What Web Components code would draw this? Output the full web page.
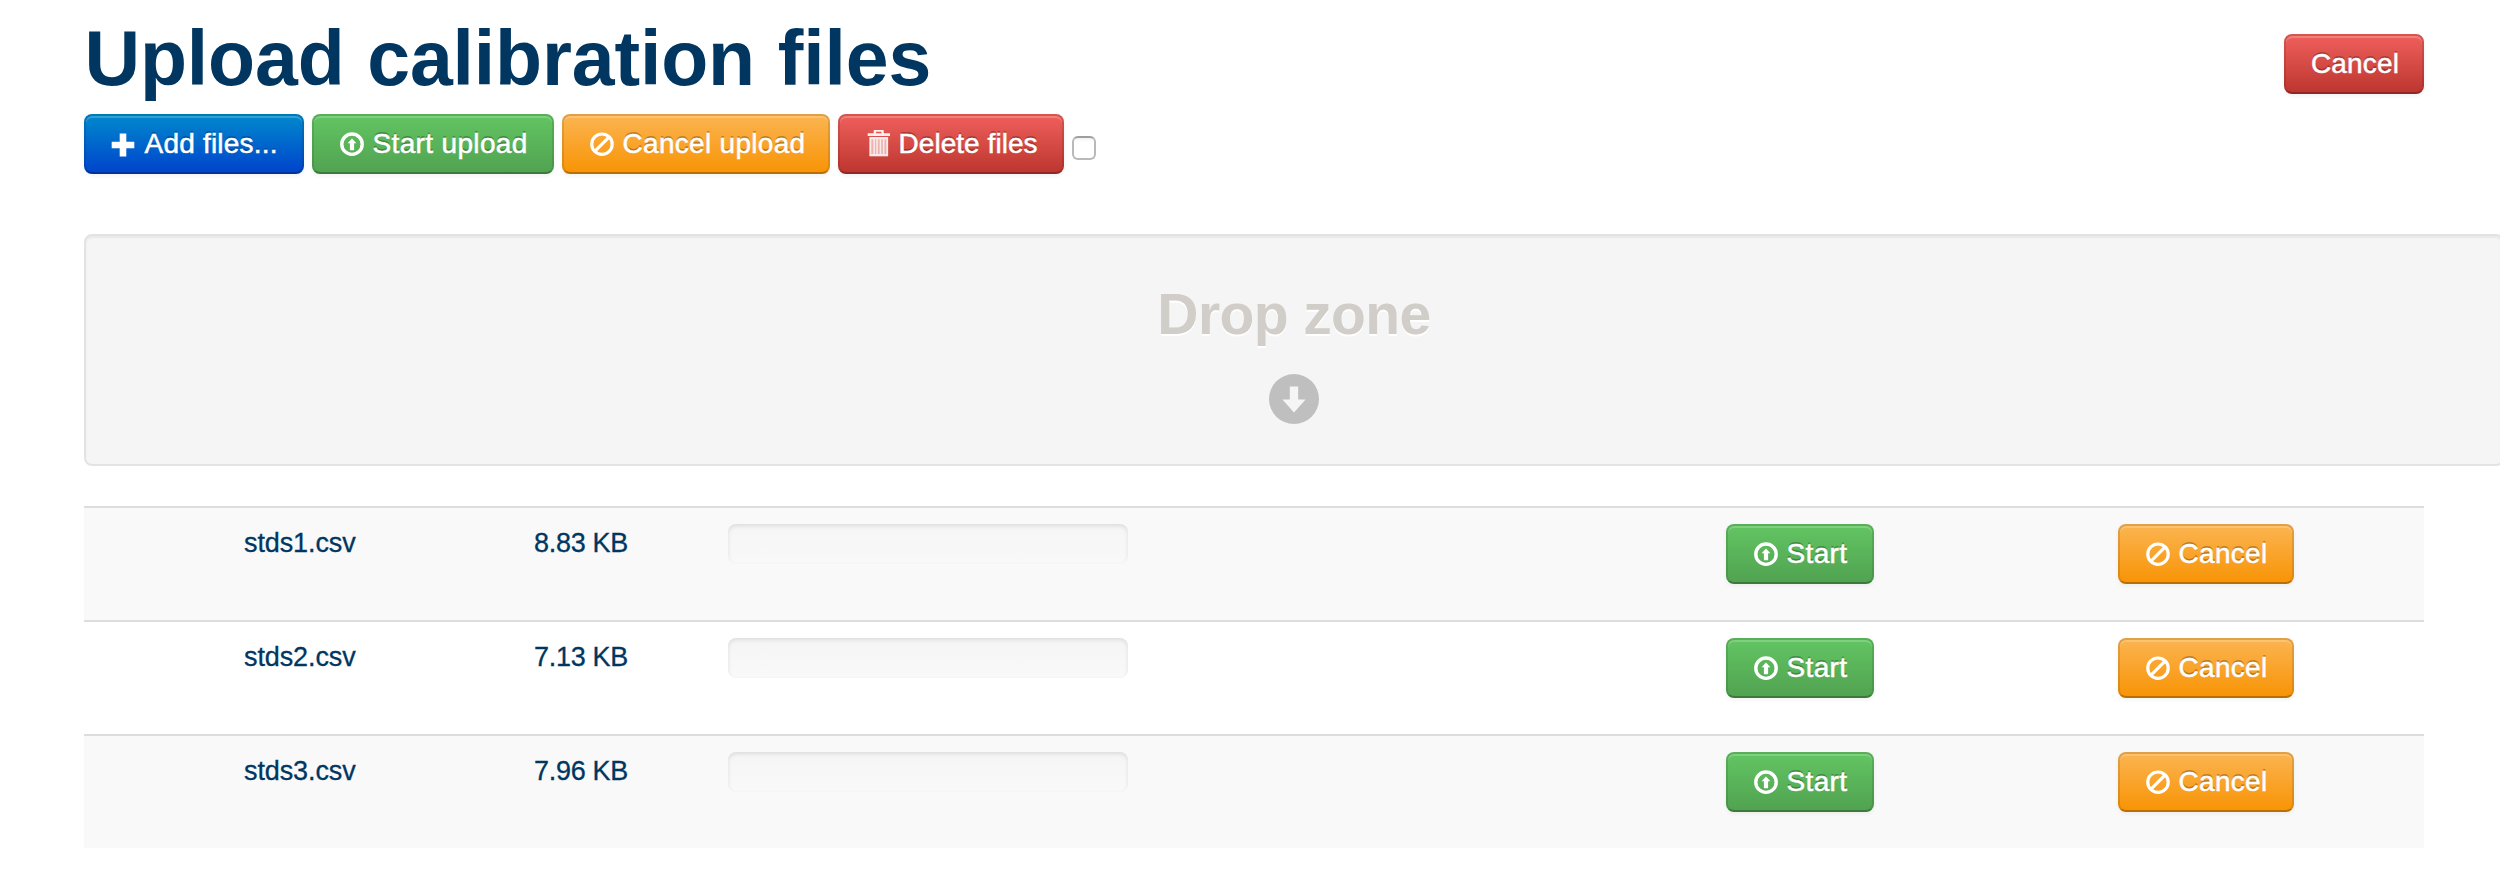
<!DOCTYPE html>
<html lang="en">
<head>
<meta charset="utf-8">
<title>Upload calibration files</title>
<style>
html,body{margin:0;background:#fff}
body{height:890px;overflow:hidden;color:#003660;font-family:"Liberation Sans",Arial,sans-serif}
</style>
</head>
<body>
<upload-page></upload-page>
<script>
const define=(name,html,setup)=>{
  const t=document.createElement('template');
  t.innerHTML=html;
  customElements.define(name,class extends HTMLElement{
    constructor(){super();this.attachShadow({mode:'open'}).append(t.content.cloneNode(true))}
    connectedCallback(){if(setup)setup(this,this.shadowRoot)}
  });
};

const glyphs={
  plus:'<path d="M9.700 3.600h6.600v8.200h8v6.400h-8V26.400H9.700v-8.200h-8v-6.400h8z"/>',
  up:'<circle cx="14" cy="14.200" r="10.200" fill="none" stroke="#fff" stroke-width="3.400"/><path d="M14 8.600l4.400 4.700h-2.300v6.900h-4.200v-6.900H9.600z"/>',
  ban:'<circle cx="14" cy="14.200" r="10.200" fill="none" stroke="#fff" stroke-width="3.200"/><path d="M7 21.200L21 7.200" fill="none" stroke="#fff" stroke-width="3.200"/>',
  trash:'<path fill-rule="evenodd" fill-opacity=".9" d="M9.700 3.200V0h10v3.200H26V6H3.700V3.200zM12 1.700v1.500h5.400V1.700z"/><path d="M5.500 7h18.600v19.200H5.500z" fill-opacity=".58"/><path fill-opacity=".75" d="M5.500 7h18.600v2.200H5.500zM5.500 24h18.600v2.200H5.500zM5.500 9.200H7.300V24H5.500zM9.400 9.200H10.900V24H9.400zM12.300 9.200h1.500V24h-1.500zM15.700 9.200h1.500V24h-1.500zM18.900 9.200h1.500V24h-1.500zM22.300 9.200h1.800V24h-1.800z"/>',
  down:'<path fill="#bfbfbf" fill-rule="evenodd" d="M14 1.500a12.500 12.500 0 1 0 0 25a12.500 12.500 0 1 0 0-25zM11.900 7.800h4.200v6.400h3.700L14 20.800l-5.800-6.600h3.700z"/>'
};

define('ui-icon',`<style>
:host{display:block;width:28px;height:28px;flex:none}
svg{display:block;width:100%;height:100%;fill:#fff;overflow:visible}
</style><svg viewBox="0 0 28 28"></svg>`,(el,root)=>{
  root.querySelector('svg').innerHTML=glyphs[el.getAttribute('name')];
});

define('ui-button',`<style>
:host{display:block;flex:none;width:var(--w);height:60px}
button{box-sizing:border-box;display:flex;align-items:center;gap:6.500px;width:100%;height:60px;margin:0;padding:0 0 0 var(--pl,24px);
 border:2px solid;border-color:rgba(0,0,0,.1) rgba(0,0,0,.1) rgba(0,0,0,.25);border-radius:8px;
 background:linear-gradient(var(--a),var(--b)) padding-box,linear-gradient(var(--a),var(--b)) border-box;
 box-shadow:inset 0 2px 0 rgba(255,255,255,.2),0 2px 4px rgba(0,0,0,.05);
 color:#fff;font:28px/40px "Liberation Sans",Arial,sans-serif;letter-spacing:var(--ls,.3px);white-space:nowrap;
 text-shadow:0 -2px 0 rgba(0,0,0,.25);-webkit-text-stroke:.5px #fff}
:host([kind=primary]){--a:#0088cc;--b:#0044cc}
:host([kind=success]){--a:#62c462;--b:#51a351}
:host([kind=warning]){--a:#fbb450;--b:#f89406}
:host([kind=danger]){--a:#ee5f5b;--b:#bd362f}
</style><button><slot name="icon"></slot><slot></slot></button>`);

define('page-header',`<style>
:host{display:flex;justify-content:space-between;align-items:flex-start;height:114px}
h1{margin:0;padding-top:18px;font-size:77px;line-height:80px;font-weight:700;white-space:nowrap;letter-spacing:-.15px;word-spacing:1.500px;text-indent:.5px}
.end{padding-top:34px}
</style><h1><slot></slot></h1><div class="end"><slot name="action"></slot></div>`);

define('upload-toolbar',`<style>
:host{display:flex;gap:8px;height:120px}
input{appearance:none;box-sizing:border-box;width:24px;height:24px;margin:22px 0 0;border:2px solid #b9b9b9;border-top-color:#9e9e9e;border-radius:6px;background:linear-gradient(#f2f2f2,#fff 4px)}
</style><slot></slot><input type="checkbox" aria-label="Select all">`);

define('drop-zone',`<style>
:host{box-sizing:border-box;display:flex;flex-direction:column;align-items:center;width:2420px;height:232px;
 border:2px solid #e3e3e3;border-radius:8px;background:#f5f5f5;box-shadow:inset 0 2px 2px rgba(0,0,0,.05);
 padding-top:46px}
.label{font-size:57px;line-height:64px;font-weight:700;color:#d1cdc8;text-shadow:0 2px 0 #fff;white-space:nowrap;letter-spacing:-.6px}
ui-icon{width:56px;height:56px;margin-top:25px}
</style><span class="label"><slot></slot></span><ui-icon name="down"></ui-icon>`);

define('progress-track',`<style>
:host{display:block;width:400px;height:40px;border-radius:8px;background:linear-gradient(#f5f5f5,#f9f9f9);box-shadow:inset 0 2px 4px rgba(0,0,0,.1)}
</style>`);

define('file-row',`<style>
:host{box-sizing:border-box;display:grid;grid-template-columns:144px 290px 194px 998px 392px 1fr;height:114px;border-top:2px solid #ddd}
:host(:nth-child(odd)){background:#f9f9f9}
.c{padding:16px 16px 0}
.c{font-size:27px;line-height:40px;white-space:nowrap}
.name,.size{padding-top:15px;letter-spacing:-.1px;-webkit-text-stroke:.3px #003660}
.size{letter-spacing:-.3px}
</style><div class="c"></div><div class="c name"></div><div class="c size"></div>
<div class="c"><progress-track></progress-track></div>
<div class="c"><ui-button kind="success" style="--w:148px;--ls:.35px"><ui-icon slot="icon" name="up"></ui-icon>Start</ui-button></div>
<div class="c"><ui-button kind="warning" style="--w:176px"><ui-icon slot="icon" name="ban"></ui-icon>Cancel</ui-button></div>`,(el,root)=>{
  root.querySelector('.name').textContent=el.getAttribute('name');
  root.querySelector('.size').textContent=el.getAttribute('size');
});

define('file-list',`<style>:host{display:flex;flex-direction:column;margin-top:40px}</style><slot></slot>`);

define('upload-page',`<style>
:host{display:block;width:2340px;padding-left:84px}
</style>
<page-header>Upload calibration files<ui-button slot="action" kind="danger" style="--w:140px;--pl:25px;--ls:.15px">Cancel</ui-button></page-header>
<upload-toolbar>
<ui-button kind="primary" style="--w:220px;--ls:.2px"><ui-icon slot="icon" name="plus"></ui-icon>Add files...</ui-button>
<ui-button kind="success" style="--w:242px;--ls:.35px"><ui-icon slot="icon" name="up"></ui-icon>Start upload</ui-button>
<ui-button kind="warning" style="--w:268px"><ui-icon slot="icon" name="ban"></ui-icon>Cancel upload</ui-button>
<ui-button kind="danger" style="--w:226px;--ls:.05px"><ui-icon slot="icon" name="trash"></ui-icon>Delete files</ui-button>
</upload-toolbar>
<drop-zone>Drop zone</drop-zone>
<file-list>
<file-row name="stds1.csv" size="8.83 KB"></file-row>
<file-row name="stds2.csv" size="7.13 KB"></file-row>
<file-row name="stds3.csv" size="7.96 KB"></file-row>
</file-list>`);
</script>
</body>
</html>
